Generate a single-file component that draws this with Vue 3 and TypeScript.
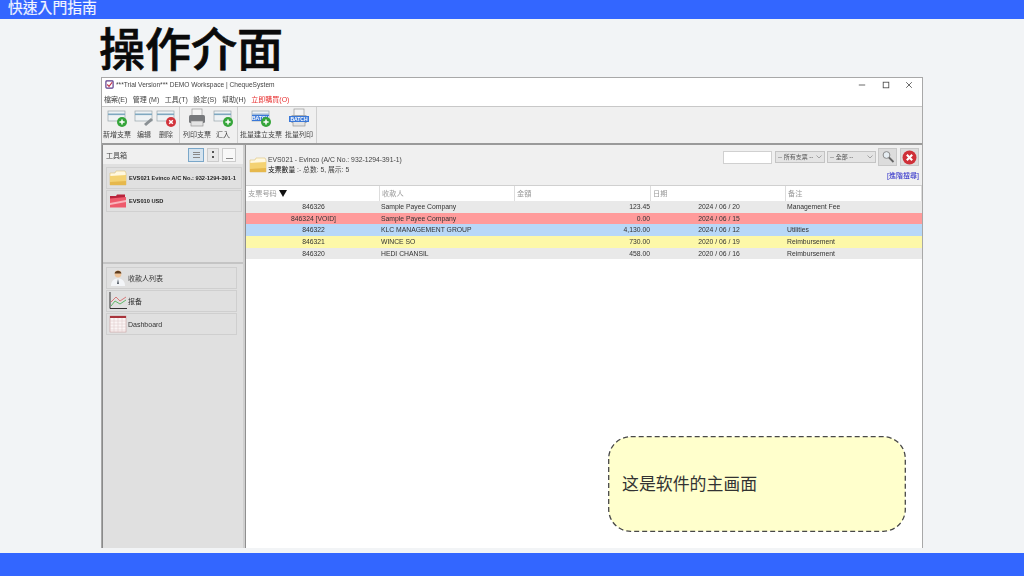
<script setup lang="ts">
interface ToolButton {
  label: string;
  icon: 'cheque' | 'printer' | 'batch' | 'batchprint';
  badge?: 'add' | 'remove' | 'edit';
  width: number;
}

const menus = ['檔案(E)', '管理 (M)', '工具(T)', '設定(S)', '幫助(H)'];

const toolGroups: ToolButton[][] = [
  [
    { label: '新增支票', icon: 'cheque', badge: 'add', width: 30 },
    { label: '编辑', icon: 'cheque', badge: 'edit', width: 24 },
    { label: '删除', icon: 'cheque', badge: 'remove', width: 20 },
  ],
  [
    { label: '列印支票', icon: 'printer', width: 34 },
    { label: '汇入', icon: 'cheque', badge: 'add', width: 18 },
  ],
  [
    { label: '批量建立支票', icon: 'batch', badge: 'add', width: 46 },
    { label: '批量列印', icon: 'batchprint', width: 30 },
  ],
];

const columns = ['支票号码', '收款人', '金額', '日期', '备注'];

const rows = [
  { no: '846326', payee: 'Sample Payee Company', amount: '123.45', date: '2024 / 06 / 20', memo: 'Management Fee', tone: 'grey' },
  { no: '846324 [VOID]', payee: 'Sample Payee Company', amount: '0.00', date: '2024 / 06 / 15', memo: '', tone: 'red' },
  { no: '846322', payee: 'KLC MANAGEMENT GROUP', amount: '4,130.00', date: '2024 / 06 / 12', memo: 'Utilities', tone: 'blue' },
  { no: '846321', payee: 'WINCE SO', amount: '730.00', date: '2020 / 06 / 19', memo: 'Reimbursement', tone: 'yellow' },
  { no: '846320', payee: 'HEDI CHANSIL', amount: '458.00', date: '2020 / 06 / 16', memo: 'Reimbursement', tone: 'grey' },
];
</script>

<template>
  <div class="page">
    <header class="topbar">快速入門指南</header>
    <h1 class="title">操作介面</h1>

    <section class="window">
      <div class="titlebar">
        <svg class="app-icon" viewBox="0 0 10 10" width="9" height="9">
          <rect x="1" y="1" width="8" height="8" rx="1" fill="#fff" stroke="#5a3a8a" stroke-width="1.3" />
          <path d="M2.5 5 L4.5 7 L8 2.5" fill="none" stroke="#c0304a" stroke-width="1.3" />
        </svg>
        <span class="window-name">***Trial Version*** DEMO Workspace | ChequeSystem</span>
        <div class="window-controls">
          <svg viewBox="0 0 10 10" width="8" height="8"><path d="M1 5H9" stroke="#444" /></svg>
          <svg viewBox="0 0 10 10" width="8" height="8"><rect x="1.5" y="1.5" width="7" height="7" fill="none" stroke="#444" /></svg>
          <svg viewBox="0 0 10 10" width="8" height="8"><path d="M1.5 1.5L8.5 8.5M8.5 1.5L1.5 8.5" stroke="#444" /></svg>
        </div>
      </div>

      <nav class="menubar">
        <span v-for="m in menus" :key="m">{{ m }}</span>
        <span class="buy">立即購買(O)</span>
      </nav>

      <div class="toolbar">
        <div v-for="(group, i) in toolGroups" :key="i" class="tool-group">
          <div v-for="tool in group" :key="tool.label" class="tool" :style="{ width: tool.width + 'px' }">
            <svg viewBox="0 0 22 20" width="22" height="20">
              <template v-if="tool.icon === 'printer' || tool.icon === 'batchprint'">
                <rect x="6" y="1" width="10" height="7" fill="#f4f4f4" stroke="#999" stroke-width="0.7" />
                <rect x="3" y="7" width="16" height="8" rx="1.5" :fill="tool.icon === 'printer' ? '#77797c' : '#a5a9ad'" />
                <rect x="5" y="13" width="12" height="5" fill="#e4e4e4" stroke="#888" stroke-width="0.6" />
                <template v-if="tool.icon === 'batchprint'">
                  <rect x="1" y="8" width="20" height="6" fill="#3a78d8" />
                  <text x="11" y="13" class="batch-text">BATCH</text>
                </template>
              </template>
              <template v-else>
                <rect x="2" y="3" width="17" height="10" fill="#eef2f4" stroke="#98a5ab" stroke-width="0.7" />
                <rect x="2" y="5.5" width="17" height="1.6" :fill="tool.icon === 'batch' ? '#9db7d6' : '#7fa8c0'" />
                <template v-if="tool.icon === 'batch'">
                  <rect x="2" y="7" width="17" height="6" fill="#3a78d8" />
                  <text x="10.5" y="12" class="batch-text">BATCH</text>
                </template>
              </template>
              <template v-if="tool.badge === 'add'">
                <circle cx="16" cy="14" r="5" fill="#35a53a" />
                <path d="M16 11.4V16.6M13.4 14H18.6" stroke="#fff" stroke-width="1.5" />
              </template>
              <template v-if="tool.badge === 'remove'">
                <circle cx="16" cy="14" r="5" fill="#d2343c" />
                <path d="M14.2 12.2L17.8 15.8M17.8 12.2L14.2 15.8" stroke="#fff" stroke-width="1.5" />
              </template>
              <path v-if="tool.badge === 'edit'" d="M11 16L18 10L20 12L13 18Z" fill="#8a9094" />
            </svg>
            <span>{{ tool.label }}</span>
          </div>
        </div>
      </div>

      <div class="main">
        <aside class="sidebar">
          <div class="side-head">
            <span>工具箱</span>
            <div class="side-modes">
              <span class="mode active"><i></i><i></i><i></i></span>
              <span class="mode dots"><i></i><i></i></span>
              <span class="mode blank"><i></i></span>
            </div>
          </div>
          <div class="accounts">
            <div class="account">
              <svg viewBox="0 0 18 16" width="18" height="16">
                <path d="M1 3H6L7 1H16L17 3V15H1Z" fill="#fff8e0" stroke="#d9b860" stroke-width="0.5" />
                <path d="M1 6L17 5V15H1Z" fill="#f4d272" />
                <path d="M1 12L17 11V15H1Z" fill="#e6b84c" />
              </svg>
              <b>EVS021 Evinco A/C No.: 932-1294-391-1</b>
            </div>
            <div class="account">
              <svg viewBox="0 0 18 16" width="18" height="16">
                <path d="M1 3H7L8 1.5H16V14H1Z" fill="#b8243c" />
                <path d="M1 5.5L17 4V14.5H1Z" fill="#ee5a6c" />
                <path d="M1 10L17 7V9L1 12Z" fill="#f9b4bc" />
              </svg>
              <b>EVS010 USD</b>
            </div>
          </div>
          <div class="shortcuts">
            <div class="shortcut">
              <svg viewBox="0 0 18 18" width="18" height="18">
                <circle cx="9" cy="5" r="3.4" fill="#eec49a" />
                <path d="M5.6 4.4C6 1 12 1 12.4 4.4Z" fill="#5d3c1e" />
                <path d="M2 17C2 11 6 9.5 9 9.5S16 11 16 17Z" fill="#f3f5f8" />
                <path d="M9 10L8.2 15H9.8Z" fill="#26303c" />
              </svg>
              <span>收款人列表</span>
            </div>
            <div class="shortcut">
              <svg viewBox="0 0 18 18" width="18" height="18">
                <path d="M1 0V16.5H18" fill="none" stroke="#333" stroke-width="1" />
                <path d="M2 10L7 5L11 9L17 5" fill="none" stroke="#d87a7a" stroke-width="1" />
                <path d="M2 14L6 9L11 12L17 8" fill="none" stroke="#62b86a" stroke-width="1" />
              </svg>
              <span>报备</span>
            </div>
            <div class="shortcut">
              <svg viewBox="0 0 18 18" width="18" height="18">
                <rect x="1" y="1" width="16" height="16" fill="#fbf5f5" stroke="#c89a9a" stroke-width="0.6" />
                <rect x="1" y="1" width="16" height="2" fill="#a8343c" />
                <path d="M1 6H17M1 9H17M1 12H17M1 15H17M5 3V17M9 3V17M13 3V17" stroke="#d8c4c4" stroke-width="0.5" />
              </svg>
              <span>Dashboard</span>
            </div>
          </div>
        </aside>

        <div class="content">
          <div class="content-head">
            <svg class="head-folder" viewBox="0 0 18 16" width="18" height="16">
              <path d="M1 3H6L7 1H16L17 3V15H1Z" fill="#fff8e0" stroke="#d9b860" stroke-width="0.5" />
              <path d="M1 6L17 5V15H1Z" fill="#f4d272" />
              <path d="M1 12L17 11V15H1Z" fill="#e6b84c" />
            </svg>
            <div class="head-text">
              <span>EVS021 - Evinco (A/C No.: 932-1294-391-1)</span>
              <span><em>支票數量</em> :- 总数: 5, 展示: 5</span>
            </div>
            <div class="filters">
              <div class="filter-row">
                <span class="search-box"></span>
                <span class="select wide">-- 所有支票 --<svg viewBox="0 0 6 4" width="6" height="4"><path d="M0.5 0.5L3 3L5.5 0.5" fill="none" stroke="#888" stroke-width="0.7" /></svg></span>
                <span class="select">-- 全部 --<svg viewBox="0 0 6 4" width="6" height="4"><path d="M0.5 0.5L3 3L5.5 0.5" fill="none" stroke="#888" stroke-width="0.7" /></svg></span>
                <span class="icon-btn">
                  <svg viewBox="0 0 14 14" width="14" height="14">
                    <circle cx="5.5" cy="5" r="3.4" fill="#e6edf2" stroke="#8a8a8a" stroke-width="1" />
                    <path d="M8 7.5L12.5 12" stroke="#666" stroke-width="1.8" />
                  </svg>
                </span>
                <span class="icon-btn">
                  <svg viewBox="0 0 14 14" width="15" height="15">
                    <circle cx="7" cy="7" r="6.5" fill="#cf3038" />
                    <path d="M4.5 4.5L9.5 9.5M9.5 4.5L4.5 9.5" stroke="#fff" stroke-width="2" />
                  </svg>
                </span>
              </div>
              <a class="advanced">[進階搜尋]</a>
            </div>
          </div>

          <div class="table">
            <div class="row header">
              <div v-for="(col, i) in columns" :key="col" class="cell">
                {{ col }}<span v-if="i === 0" class="sort"></span>
              </div>
            </div>
            <div v-for="row in rows" :key="row.no" class="row" :class="row.tone">
              <div class="cell center">{{ row.no }}</div>
              <div class="cell">{{ row.payee }}</div>
              <div class="cell right">{{ row.amount }}</div>
              <div class="cell center">{{ row.date }}</div>
              <div class="cell">{{ row.memo }}</div>
            </div>
          </div>
        </div>
      </div>
    </section>

    <div class="callout">
      <svg class="callout-shape" viewBox="0 0 298 96" width="298" height="96">
        <rect x="0.7" y="0.7" width="296.6" height="94.6" rx="22" fill="#ffffcc" stroke="#484848" stroke-width="1.3" stroke-dasharray="5 3" />
      </svg>
      <span>这是软件的主画面</span>
    </div>
    <footer class="bottombar"></footer>
  </div>
</template>

<style>
html,
body {
  margin: 0;
  background: #f2f4f6;
}
</style>

<style scoped>
.page {
  position: relative;
  width: 1024px;
  height: 576px;
  overflow: hidden;
  display: flex;
  flex-direction: column;
  background: #f2f4f6;
  font-family: "Liberation Sans", "Noto Sans CJK TC", sans-serif;
  color: #333;
}
.topbar {
  height: 19px;
  flex: none;
  padding-left: 8px;
  background: #3366ff;
  color: #f4f6ff;
  font-size: 14.8px;
  line-height: 16px;
  -webkit-text-stroke: 0.2px #f4f6ff;
}
.title {
  height: 58px;
  flex: none;
  margin: 0;
  padding-left: 99px;
  font-size: 46px;
  font-weight: 500;
  line-height: 63px;
  color: #0a0a0a;
  -webkit-text-stroke: 0.7px #0a0a0a;
}
.window {
  width: 822px;
  height: 471px;
  flex: none;
  margin-left: 101px;
  box-sizing: border-box;
  border: 1px solid #a8a8a8;
  border-bottom: none;
  display: flex;
  flex-direction: column;
  background: #f0f0f0;
  font-size: 7px;
  filter: blur(0.3px);
}
.titlebar {
  height: 13px;
  flex: none;
  display: flex;
  align-items: center;
  gap: 2px;
  padding: 0 9px 0 3px;
  background: #fff;
}
.window-name {
  color: #444;
  font-size: 6.6px;
}
.window-controls {
  margin-left: auto;
  display: flex;
  gap: 15.5px;
}
.menubar {
  height: 15px;
  flex: none;
  display: flex;
  align-items: center;
  gap: 5.5px;
  padding-left: 2px;
  background: #fff;
  border-bottom: 1px solid #c8c8c8;
  color: #444;
}
.buy {
  color: #e83030;
}
.toolbar {
  height: 36px;
  flex: none;
  display: flex;
  background: #f0f0f0;
  border-bottom: 2px solid #9a9a9a;
}
.tool-group {
  display: flex;
  align-items: flex-start;
  padding-top: 1px;
  border-right: 1px solid #d0d0d0;
}
.tool-group:nth-child(1) {
  padding-right: 3px;
}
.tool-group:nth-child(2) {
  padding-right: 5px;
}
.tool-group:nth-child(3) {
  padding-right: 2px;
}
.tool {
  display: flex;
  flex-direction: column;
  align-items: center;
  white-space: nowrap;
  color: #444;
}
.tool span {
  line-height: 11px;
  margin-top: 1px;
}
.batch-text {
  fill: #fff;
  font-size: 5px;
  font-weight: 700;
  text-anchor: middle;
}
.main {
  flex: 1;
  display: flex;
  min-height: 0;
}
.sidebar {
  width: 143px;
  flex: none;
  box-sizing: border-box;
  border-left: 1px solid #8a8a8a;
  border-right: 2px solid #cfcfcf;
  background: #e0e0e0;
  display: flex;
  flex-direction: column;
}
.side-head {
  height: 19px;
  flex: none;
  display: flex;
  align-items: center;
  padding: 0 7px 0 3px;
  background: #f0f0f0;
  color: #444;
  font-size: 7px;
}
.side-modes {
  margin-left: auto;
  display: flex;
  gap: 3px;
}
.mode {
  width: 16px;
  height: 14px;
  box-sizing: border-box;
  border: 1px solid #ccc;
  background: #e8e8e8;
  display: flex;
  flex-direction: column;
  align-items: center;
  justify-content: center;
  gap: 1.5px;
}
.mode i {
  display: block;
  width: 7px;
  height: 1px;
  background: #888;
}
.mode.active {
  border-color: #7aa7c9;
  background: #d5e3ee;
}
.mode.dots {
  width: 12px;
  gap: 3px;
}
.mode.dots i {
  width: 2px;
  height: 2px;
  background: #555;
}
.mode.blank {
  width: 14px;
  background: #f8f8f8;
  justify-content: flex-end;
  padding-bottom: 2px;
}
.accounts {
  height: 100px;
  flex: none;
  box-sizing: border-box;
  padding: 3px 1px 0 3px;
  border-bottom: 2px solid #c4c4c4;
  background: #e0e0e0;
  display: flex;
  flex-direction: column;
  gap: 1px;
}
.account {
  height: 22px;
  flex: none;
  box-sizing: border-box;
  border: 1px solid #d0d0d0;
  padding-left: 2px;
  display: flex;
  align-items: center;
  gap: 2px;
  font-size: 5.7px;
  white-space: nowrap;
  color: #222;
}
.shortcuts {
  margin-top: 3px;
  padding: 0 6px 0 3px;
  display: flex;
  flex-direction: column;
  gap: 1px;
}
.shortcut {
  height: 22px;
  box-sizing: border-box;
  border: 1px solid #cfcfcf;
  display: flex;
  align-items: center;
  gap: 1px;
  padding-left: 2px;
  color: #333;
}
.content {
  flex: 1;
  min-width: 0;
  display: flex;
  flex-direction: column;
  background: #fff;
  border-left: 1px solid #8f8f8f;
}
.content-head {
  height: 40px;
  flex: none;
  display: flex;
  align-items: center;
  padding-left: 3px;
  background: #f0f0f0;
}
.head-text {
  margin-left: 1px;
  display: flex;
  flex-direction: column;
  gap: 2px;
  line-height: 8px;
  font-size: 6.8px;
  color: #444;
}
.head-text em {
  font-style: normal;
  color: #111;
}
.filters {
  margin-left: auto;
  align-self: flex-start;
  padding: 3px 3px 0 0;
  display: flex;
  flex-direction: column;
  align-items: flex-end;
}
.filter-row {
  display: flex;
  align-items: center;
  gap: 2px;
}
.search-box {
  width: 49px;
  height: 13px;
  margin-right: 1px;
  box-sizing: border-box;
  border: 1px solid #d0d0d0;
  background: #fff;
}
.select {
  position: relative;
  width: 49px;
  height: 12px;
  box-sizing: border-box;
  padding-left: 2px;
  border: 1px solid #c4c4c4;
  background: #e4e4e4;
  font-size: 6px;
  line-height: 10px;
  color: #555;
}
.select.wide {
  width: 50px;
}
.select svg {
  position: absolute;
  right: 2px;
  top: 3px;
}
.icon-btn {
  width: 19px;
  height: 18px;
  box-sizing: border-box;
  border: 1px solid #c8c8c8;
  background: #dcdcdc;
  display: flex;
  align-items: center;
  justify-content: center;
}
.icon-btn + .icon-btn {
  margin-left: 1px;
}
.advanced {
  margin-top: 6px;
  color: #2a2ac8;
  font-size: 7px;
  line-height: 8px;
}
.table {
  display: flex;
  flex-direction: column;
}
.row {
  display: grid;
  grid-template-columns: 134px 135px 136px 135px 1fr;
  height: 11.7px;
  line-height: 11.7px;
  font-size: 6.8px;
  color: #333;
}
.row.header {
  height: 16px;
  line-height: 15px;
  font-size: 7.2px;
  color: #999;
  border-top: 1px solid #d0d0d0;
  box-sizing: border-box;
}
.row.header .cell {
  padding-left: 2px;
  border-right: 1px solid #ddd;
}
.cell {
  padding-left: 1px;
  white-space: nowrap;
  overflow: hidden;
}
.center {
  text-align: center;
}
.right {
  padding-right: 1px;
  text-align: right;
}
.sort {
  display: inline-block;
  margin-left: 2px;
  border-left: 4px solid transparent;
  border-right: 4px solid transparent;
  border-top: 7px solid #111;
  vertical-align: -1px;
}
.grey {
  background: #e9e9e9;
}
.red {
  background: #ff9b9b;
}
.blue {
  background: #b8d8f8;
}
.yellow {
  background: #fdf8a8;
}
.callout {
  position: absolute;
  left: 608px;
  top: 436px;
  width: 298px;
  height: 96px;
  box-sizing: border-box;
  padding-left: 14px;
  color: #333;
  font-size: 16.9px;
  line-height: 97px;
}
.callout-shape {
  position: absolute;
  left: 0;
  top: 0;
}
.callout span {
  position: relative;
}
.bottombar {
  height: 23px;
  flex: none;
  margin-top: auto;
  background: #3366ff;
}
</style>
